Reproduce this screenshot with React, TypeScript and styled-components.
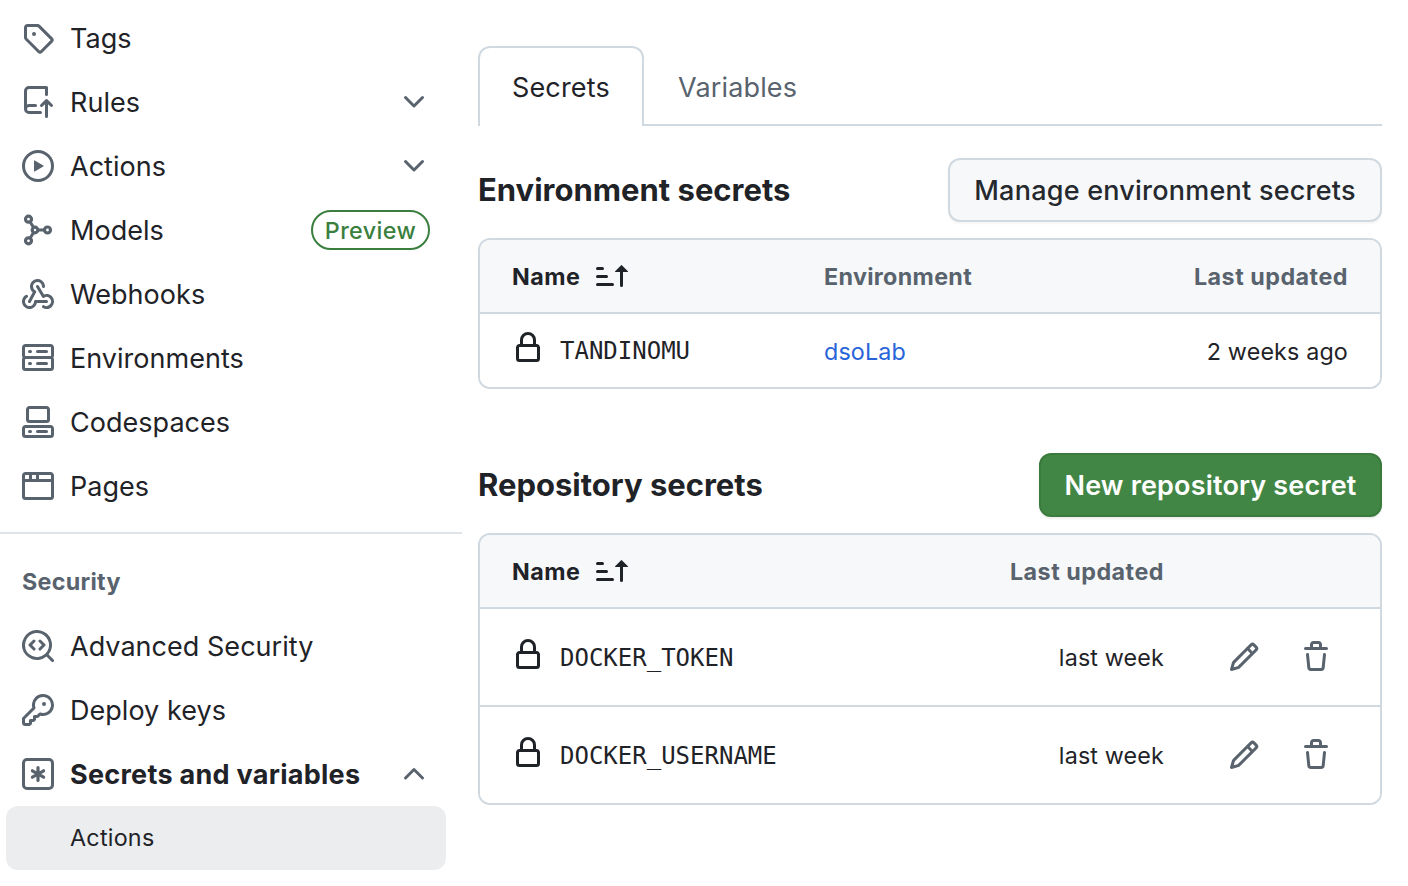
import React from "react";
import styled, { createGlobalStyle } from "styled-components";

const GlobalStyle = createGlobalStyle`
  * { box-sizing: border-box; }
  body {
    margin: 0;
    background: #ffffff;
    color: #1f2328;
    font-family: Inter, "Liberation Sans", sans-serif;
    font-size: 23.3px;
    letter-spacing: 0.15px;
    -webkit-font-smoothing: antialiased;
  }
  button { font-family: inherit; }
`;

const color = {
  fg: "#1f2328",
  muted: "#59636e",
  border: "#d1d9e0",
  subtle: "#f6f8fa",
  link: "#2864d9",
  green: "#3b7f3f",
};

const paths = {
  tag: "M1 7.775V2.75C1 1.784 1.784 1 2.75 1h5.025c.464 0 .91.184 1.238.513l6.25 6.25a1.75 1.75 0 0 1 0 2.474l-5.026 5.026a1.75 1.75 0 0 1-2.474 0l-6.25-6.25A1.752 1.752 0 0 1 1 7.775Zm1.5 0c0 .066.026.13.073.177l6.25 6.25a.25.25 0 0 0 .354 0l5.025-5.025a.25.25 0 0 0 0-.354l-6.25-6.25a.25.25 0 0 0-.177-.073H2.75a.25.25 0 0 0-.25.25ZM6 5a1 1 0 1 1 0 2 1 1 0 0 1 0-2Z",
  repoPush:
    "M1 2.5A2.5 2.5 0 0 1 3.5 0h8.75a.75.75 0 0 1 .75.75v3.5a.75.75 0 0 1-1.5 0V1.5h-8a1 1 0 0 0-1 1v6.708A2.493 2.493 0 0 1 3.5 9h3.25a.75.75 0 0 1 0 1.5H3.5a1 1 0 0 0 0 2h5.75a.75.75 0 0 1 0 1.5H3.5A2.5 2.5 0 0 1 1 11.5Zm13.23 7.79h-.001l-1.224-1.224v6.184a.75.75 0 0 1-1.5 0V9.066L10.28 10.29a.75.75 0 0 1-1.06-1.061l2.505-2.504a.75.75 0 0 1 1.06 0L15.29 9.23a.751.751 0 0 1-.018 1.042.751.751 0 0 1-1.042.018Z",
  play: "M8 0a8 8 0 1 1 0 16A8 8 0 0 1 8 0ZM1.5 8a6.5 6.5 0 1 0 13 0 6.5 6.5 0 0 0-13 0Zm4.879-2.773 4.264 2.559a.25.25 0 0 1 0 .428l-4.264 2.559A.25.25 0 0 1 6 10.559V5.442a.25.25 0 0 1 .379-.215Z",
  webhook:
    "M5.5 4.25a2.25 2.25 0 0 1 4.5 0 .75.75 0 0 0 1.5 0 3.75 3.75 0 1 0-6.14 2.889l-2.272 4.258a.75.75 0 0 0 1.324.706L7 7.25a.75.75 0 0 0-.309-1.015A2.25 2.25 0 0 1 5.5 4.25Z M7.364 3.607a.75.75 0 0 1 1.03.257l2.608 4.349a3.75 3.75 0 1 1-.628 6.785.75.75 0 0 1 .752-1.299 2.25 2.25 0 1 0-.033-3.88.75.75 0 0 1-1.03-.256L7.107 4.636a.75.75 0 0 1 .257-1.03Z M2.9 8.776A.75.75 0 0 1 2.625 9.8 2.25 2.25 0 1 0 6 11.75a.75.75 0 0 1 .75-.751h5.5a.75.75 0 0 1 0 1.5H7.425a3.751 3.751 0 1 1-5.55-3.998.75.75 0 0 1 1.024.274Z",
  server:
    "M1.75 1h12.5c.966 0 1.75.784 1.75 1.75v4c0 .372-.116.717-.314 1 .198.283.314.628.314 1v4a1.75 1.75 0 0 1-1.75 1.75H1.75A1.75 1.75 0 0 1 0 12.75v-4c0-.358.109-.707.314-1a1.739 1.739 0 0 1-.314-1v-4C0 1.784.784 1 1.75 1ZM1.5 2.75v4c0 .138.112.25.25.25h12.5a.25.25 0 0 0 .25-.25v-4a.25.25 0 0 0-.25-.25H1.75a.25.25 0 0 0-.25.25Zm.25 5.75a.25.25 0 0 0-.25.25v4c0 .138.112.25.25.25h12.5a.25.25 0 0 0 .25-.25v-4a.25.25 0 0 0-.25-.25ZM7 4.75A.75.75 0 0 1 7.75 4h4.5a.75.75 0 0 1 0 1.5h-4.5A.75.75 0 0 1 7 4.75ZM7.75 10h4.5a.75.75 0 0 1 0 1.5h-4.5a.75.75 0 0 1 0-1.5ZM3 4.75A.75.75 0 0 1 3.75 4h.5a.75.75 0 0 1 0 1.5h-.5A.75.75 0 0 1 3 4.75ZM3.75 10h.5a.75.75 0 0 1 0 1.5h-.5a.75.75 0 0 1 0-1.5Z",
  codespaces:
    "M0 11.25c0-.966.784-1.75 1.75-1.75h12.5c.966 0 1.75.784 1.75 1.75v3A1.75 1.75 0 0 1 14.25 16H1.75A1.75 1.75 0 0 1 0 14.25Zm2-9.5C2 .784 2.784 0 3.75 0h8.5C13.216 0 14 .784 14 1.75v5a1.75 1.75 0 0 1-1.75 1.75h-8.5A1.75 1.75 0 0 1 2 6.75Zm1.75-.25a.25.25 0 0 0-.25.25v5c0 .138.112.25.25.25h8.5a.25.25 0 0 0 .25-.25v-5a.25.25 0 0 0-.25-.25Zm-2 9.5a.25.25 0 0 0-.25.25v3c0 .138.112.25.25.25h12.5a.25.25 0 0 0 .25-.25v-3a.25.25 0 0 0-.25-.25Z M7 12.75a.75.75 0 0 1 .75-.75h4.5a.75.75 0 0 1 0 1.5h-4.5a.75.75 0 0 1-.75-.75Zm-4 0a.75.75 0 0 1 .75-.75h.5a.75.75 0 0 1 0 1.5h-.5a.75.75 0 0 1-.75-.75Z",
  browser:
    "M0 2.75C0 1.784.784 1 1.75 1h12.5c.966 0 1.75.784 1.75 1.75v10.5A1.75 1.75 0 0 1 14.25 15H1.75A1.75 1.75 0 0 1 0 13.25ZM14.5 6h-13v7.25c0 .138.112.25.25.25h12.5a.25.25 0 0 0 .25-.25Zm-6-3.5v2h6V2.75a.25.25 0 0 0-.25-.25ZM5 2.5v2h2v-2Zm-3.25 0a.25.25 0 0 0-.25.25V4.5h2v-2Z",
  codescan:
    "M8.47 4.97a.75.75 0 0 0 0 1.06L9.94 7.5 8.47 8.97a.75.75 0 1 0 1.06 1.06l2-2a.75.75 0 0 0 0-1.06l-2-2a.75.75 0 0 0-1.06 0ZM6.53 6.03a.75.75 0 0 0-1.06-1.06l-2 2a.75.75 0 0 0 0 1.06l2 2a.75.75 0 1 0 1.06-1.06L5.06 7.5l1.47-1.47Z M12.246 13.307a7.501 7.501 0 1 1 1.06-1.06l2.474 2.473a.749.749 0 0 1-.326 1.275.749.749 0 0 1-.734-.215ZM1.5 7.5a6.002 6.002 0 0 0 3.608 5.504 6.002 6.002 0 0 0 6.486-1.117.748.748 0 0 1 .292-.293A6 6 0 1 0 1.5 7.5Z",
  key: "M10.5 0a5.499 5.499 0 1 1-1.288 10.848l-.932.932a.749.749 0 0 1-.53.22H7v.75a.749.749 0 0 1-.22.53l-.5.5a.749.749 0 0 1-.53.22H5v.75a.749.749 0 0 1-.22.53l-.5.5a.749.749 0 0 1-.53.22h-2A1.75 1.75 0 0 1 0 14.25v-2c0-.199.079-.389.22-.53l4.932-4.932A5.5 5.5 0 0 1 10.5 0Zm-4 5.5c-.001.431.069.86.205 1.269a.75.75 0 0 1-.181.768L1.5 12.56v1.69c0 .138.112.25.25.25h1.69l.06-.06v-1.19a.75.75 0 0 1 .75-.75h1.19l.06-.06v-1.19a.75.75 0 0 1 .75-.75h1.19l1.023-1.025a.75.75 0 0 1 .768-.18A4 4 0 1 0 6.5 5.5ZM11 6a1 1 0 1 1 0-2 1 1 0 0 1 0 2Z",
  lock: "M4 4a4 4 0 0 1 8 0v2h.25c.966 0 1.75.784 1.75 1.75v5.5A1.75 1.75 0 0 1 12.25 15h-8.5A1.75 1.75 0 0 1 2 13.25v-5.5C2 6.784 2.784 6 3.75 6H4Zm8.25 3.5h-8.5a.25.25 0 0 0-.25.25v5.5c0 .138.112.25.25.25h8.5a.25.25 0 0 0 .25-.25v-5.5a.25.25 0 0 0-.25-.25ZM10.5 6V4a2.5 2.5 0 1 0-5 0v2Z",
  pencil:
    "M11.013 1.427a1.75 1.75 0 0 1 2.474 0l1.086 1.086a1.75 1.75 0 0 1 0 2.474l-8.61 8.61c-.21.21-.47.364-.756.445l-3.251.93a.75.75 0 0 1-.927-.928l.929-3.25c.081-.286.235-.547.445-.758l8.61-8.61Zm.176 4.823L9.75 4.81l-6.286 6.287a.253.253 0 0 0-.064.108l-.558 1.953 1.953-.558a.253.253 0 0 0 .108-.064Zm1.238-3.763a.25.25 0 0 0-.354 0L10.811 3.75l1.439 1.44 1.263-1.263a.25.25 0 0 0 0-.354Z",
  trash:
    "M11 1.75V3h2.25a.75.75 0 0 1 0 1.5H2.75a.75.75 0 0 1 0-1.5H5V1.75C5 .784 5.784 0 6.75 0h2.5C10.216 0 11 .784 11 1.75ZM4.496 6.675l.66 6.6a.25.25 0 0 0 .249.225h5.19a.25.25 0 0 0 .249-.225l.66-6.6a.75.75 0 0 1 1.492.149l-.66 6.6A1.748 1.748 0 0 1 10.595 15h-5.19a1.75 1.75 0 0 1-1.741-1.575l-.66-6.6a.75.75 0 1 1 1.492-.15ZM6.5 1.75V3h3V1.75a.25.25 0 0 0-.25-.25h-2.5a.25.25 0 0 0-.25.25Z",
  sort: "m12.927 2.573 3 3A.25.25 0 0 1 15.75 6H13.5v6.75a.75.75 0 0 1-1.5 0V6H9.75a.25.25 0 0 1-.177-.427l3-3a.25.25 0 0 1 .354 0ZM0 12.25a.75.75 0 0 1 .75-.75h7.5a.75.75 0 0 1 0 1.5H.75a.75.75 0 0 1-.75-.75Zm0-4a.75.75 0 0 1 .75-.75h4.5a.75.75 0 0 1 0 1.5H.75A.75.75 0 0 1 0 8.25Zm0-4a.75.75 0 0 1 .75-.75h2.5a.75.75 0 0 1 0 1.5H.75A.75.75 0 0 1 0 4.25Z",
  chevronDown:
    "M12.78 5.22a.749.749 0 0 1 0 1.06l-4.25 4.25a.749.749 0 0 1-1.06 0L3.22 6.28a.749.749 0 1 1 1.06-1.06L8 8.939l3.72-3.719a.749.749 0 0 1 1.06 0Z",
  chevronUp:
    "M3.22 10.53a.749.749 0 0 1 0-1.06l4.25-4.25a.749.749 0 0 1 1.06 0l4.25 4.25a.749.749 0 1 1-1.06 1.06L8 6.811 4.28 10.53a.749.749 0 0 1-1.06 0Z",
};

type IconName = keyof typeof paths | "model" | "asterisk";

const Svg = styled.svg`
  width: 32px;
  height: 32px;
  flex: none;
  display: block;
  fill: currentColor;
`;

const Icon = ({ name }: { name: IconName }) => {
  if (name === "model") {
    return (
      <Svg viewBox="0 0 16 16" aria-hidden="true">
        <g fill="none" stroke="currentColor" strokeWidth="1.6">
          <circle cx="3.25" cy="2.6" r="1.5" />
          <circle cx="3.25" cy="13.4" r="1.5" />
          <circle cx="6.5" cy="8" r="1.4" />
          <circle cx="12.75" cy="8" r="1.5" />
          <path d="M4.1 4 5.75 6.7M4.1 12l1.65-2.7M8 8h3.2" strokeWidth="1.5" />
        </g>
      </Svg>
    );
  }
  if (name === "asterisk") {
    return (
      <Svg viewBox="0 0 16 16" aria-hidden="true">
        <g fill="none" stroke="currentColor" strokeWidth="1.5" strokeLinecap="round">
          <rect x=".75" y=".75" width="14.5" height="14.5" rx="1.75" />
          <path d="M8 4.75v6.5M5.2 6.4l5.6 3.2M10.8 6.4 5.2 9.6" strokeWidth="1.6" />
        </g>
      </Svg>
    );
  }
  return (
    <Svg viewBox="0 0 16 16" aria-hidden="true">
      <path d={paths[name]} />
    </Svg>
  );
};

const Page = styled.div`
  display: grid;
  grid-template-columns: 462px 904px;
  column-gap: 16px;
  width: 1408px;
  height: 886px;
  overflow: hidden;
`;

const Sidebar = styled.nav`
  padding-top: 6px;
`;

const NavItem = styled.a<{ $current?: boolean }>`
  display: flex;
  align-items: center;
  gap: 16px;
  height: 64px;
  padding: 0 32px 0 22px;
  color: ${color.muted};
  font-size: 27px;
  font-weight: ${(p) => (p.$current ? 650 : 400)};
  letter-spacing: ${(p) => (p.$current ? 0.28 : 0.03)}px;
`;

const NavLabel = styled.span`
  flex: 1;
  padding-top: 1px;
  color: ${color.fg};
  white-space: nowrap;
`;

const PreviewBadge = styled.span`
  width: 119px;
  height: 40px;
  border: 2px solid ${color.green};
  border-radius: 20px;
  color: ${color.green};
  font-size: 23.3px;
  font-weight: 500;
  line-height: 37px;
  letter-spacing: 0.4px;
  text-align: center;
`;

const Divider = styled.hr`
  height: 2px;
  margin: 14px 0 0;
  border: 0;
  background: #dfe4e9;
`;

const GroupTitle = styled.h2`
  margin: 0;
  padding: 32px 22px 0;
  height: 80px;
  color: ${color.muted};
  font-size: 23.3px;
  font-weight: 650;
  line-height: 32px;
  letter-spacing: 0.3px;
`;

const SubItem = styled.a`
  display: flex;
  align-items: center;
  height: 64px;
  margin: 0 16px 0 6px;
  padding: 0 0 1px 64px;
  border-radius: 12px;
  background: #ecedef;
  letter-spacing: 0.25px;
`;

const Main = styled.main`
  padding-top: 46px;
`;

const TabBar = styled.div`
  display: flex;
  height: 80px;
`;

const Tab = styled.div<{ $selected?: boolean }>`
  width: ${(p) => (p.$selected ? "166px" : "auto")};
  flex: ${(p) => (p.$selected ? "none" : "1")};
  padding-left: ${(p) => (p.$selected ? 32 : 34)}px;
  border: 0 solid ${color.border};
  border-width: ${(p) => (p.$selected ? "2px 2px 0" : "0 0 2px")};
  border-radius: ${(p) => (p.$selected ? "12px 12px 0 0" : "0")};
  color: ${(p) => (p.$selected ? color.fg : color.muted)};
  font-size: 27px;
  line-height: ${(p) => (p.$selected ? 79 : 83)}px;
  letter-spacing: 0.15px;
`;

const SectionHead = styled.div<{ $top: number }>`
  display: flex;
  align-items: center;
  justify-content: space-between;
  height: 64px;
  margin: ${(p) => p.$top}px 0 16px;
`;

const SectionTitle = styled.h2`
  margin: 0;
  padding-bottom: 2px;
  font-size: 31px;
  font-weight: 650;
  letter-spacing: 0;
`;

const Button = styled.button<{ $primary?: boolean }>`
  height: 64px;
  width: ${(p) => (p.$primary ? 343 : 434)}px;
  padding: 0;
  border: 2px solid ${(p) => (p.$primary ? "#3a7a3d" : color.border)};
  border-radius: 12px;
  background: ${(p) => (p.$primary ? "#428646" : color.subtle)};
  box-shadow: 0 2px 2px rgba(31, 35, 40, ${(p) => (p.$primary ? 0.08 : 0.04)});
  color: ${(p) => (p.$primary ? "#ffffff" : "#25292e")};
  font-size: 27px;
  font-weight: ${(p) => (p.$primary ? 600 : 500)};
  letter-spacing: ${(p) => (p.$primary ? 0.17 : 0.23)}px;
  white-space: nowrap;
`;

const Table = styled.div`
  border: 2px solid ${color.border};
  border-radius: 12px;
  overflow: hidden;
`;

const Row = styled.div<{ $kind: "env" | "repo"; $height: number; $head?: boolean }>`
  display: grid;
  grid-template-columns: ${(p) => (p.$kind === "env" ? "312px 1fr auto" : "1fr auto 216px")};
  align-items: center;
  height: ${(p) => p.$height}px;
  padding: 0 ${(p) => (p.$kind === "env" ? 32 : 0)}px 0 32px;
  background: ${(p) => (p.$head ? color.subtle : "#ffffff")};
  color: ${(p) => (p.$head ? color.muted : color.fg)};
  font-weight: ${(p) => (p.$head ? 650 : 400)};
  letter-spacing: ${(p) => (p.$head ? 0.5 : 0.15)}px;
  white-space: nowrap;

  & + & {
    border-top: 2px solid ${color.border};
  }
`;

const SortCell = styled.div`
  display: flex;
  align-items: center;
  color: ${color.fg};
`;

const SortLabel = styled.span`
  width: 84px;
`;

const EnvHeader = styled.span`
  letter-spacing: 0.33px;
`;

const NameCell = styled.div`
  display: flex;
  align-items: center;
  gap: 16px;
  padding-bottom: 5px;
`;

const SecretName = styled.code<{ $drop: number }>`
  padding-top: ${(p) => p.$drop}px;
  font-family: "DejaVu Sans Mono", monospace;
  font-size: 24px;
  line-height: 24px;
  letter-spacing: 0;
`;

const EnvLink = styled.a`
  padding-top: 1px;
  color: ${color.link};
`;

const CellText = styled.span`
  padding-top: 1px;
`;

const RowActions = styled.div`
  display: flex;
  gap: 40px;
  padding-left: 64px;
  color: ${color.muted};
`;

const navItems: { icon: IconName; label: string; chevron?: boolean; preview?: boolean }[] = [
  { icon: "tag", label: "Tags" },
  { icon: "repoPush", label: "Rules", chevron: true },
  { icon: "play", label: "Actions", chevron: true },
  { icon: "model", label: "Models", preview: true },
  { icon: "webhook", label: "Webhooks" },
  { icon: "server", label: "Environments" },
  { icon: "codespaces", label: "Codespaces" },
  { icon: "browser", label: "Pages" },
];

const repoSecrets = ["DOCKER_TOKEN", "DOCKER_USERNAME"];

const NameHeader = () => (
  <SortCell>
    <SortLabel>Name</SortLabel>
    <Icon name="sort" />
  </SortCell>
);

const Secret = ({ name, drop }: { name: string; drop: number }) => (
  <NameCell>
    <Icon name="lock" />
    <SecretName $drop={drop}>{name}</SecretName>
  </NameCell>
);

export default function App() {
  return (
    <>
      <GlobalStyle />
      <Page>
        <Sidebar>
          {navItems.map((item) => (
            <NavItem key={item.label}>
              <Icon name={item.icon} />
              <NavLabel>{item.label}</NavLabel>
              {item.chevron && <Icon name="chevronDown" />}
              {item.preview && <PreviewBadge>Preview</PreviewBadge>}
            </NavItem>
          ))}
          <Divider />
          <GroupTitle>Security</GroupTitle>
          <NavItem>
            <Icon name="codescan" />
            <NavLabel>Advanced Security</NavLabel>
          </NavItem>
          <NavItem>
            <Icon name="key" />
            <NavLabel>Deploy keys</NavLabel>
          </NavItem>
          <NavItem $current>
            <Icon name="asterisk" />
            <NavLabel>Secrets and variables</NavLabel>
            <Icon name="chevronUp" />
          </NavItem>
          <SubItem>Actions</SubItem>
        </Sidebar>
        <Main>
          <TabBar>
            <Tab $selected>Secrets</Tab>
            <Tab>Variables</Tab>
          </TabBar>

          <SectionHead $top={32}>
            <SectionTitle>Environment secrets</SectionTitle>
            <Button>Manage environment secrets</Button>
          </SectionHead>
          <Table>
            <Row $kind="env" $height={72} $head>
              <NameHeader />
              <EnvHeader>Environment</EnvHeader>
              <span>Last updated</span>
            </Row>
            <Row $kind="env" $height={75}>
              <Secret name="TANDINOMU" drop={5} />
              <EnvLink>dsoLab</EnvLink>
              <CellText>2 weeks ago</CellText>
            </Row>
          </Table>

          <SectionHead $top={64}>
            <SectionTitle>Repository secrets</SectionTitle>
            <Button $primary>New repository secret</Button>
          </SectionHead>
          <Table>
            <Row $kind="repo" $height={72} $head>
              <NameHeader />
              <span>Last updated</span>
            </Row>
            {repoSecrets.map((name) => (
              <Row key={name} $kind="repo" $height={98}>
                <Secret name={name} drop={7} />
                <span>last week</span>
                <RowActions>
                  <Icon name="pencil" />
                  <Icon name="trash" />
                </RowActions>
              </Row>
            ))}
          </Table>
        </Main>
      </Page>
    </>
  );
}
